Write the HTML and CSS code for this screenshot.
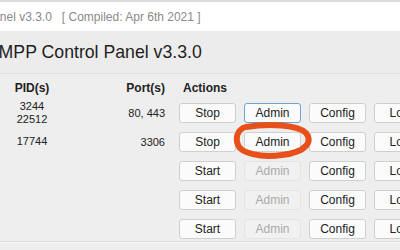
FILE: index.html
```html
<html>
    <head>
        <link rel="stylesheet" href="styles.css">
    </head>
    <body>
    <div class="titlebar"><span class="titletext">XAMPP Control Panel v3.3.0&nbsp;&nbsp;&nbsp;[ Compiled: Apr 6th 2021 ]</span></div>

    <div class="banner"><h1 class="header">XAMPP Control Panel v3.3.0</h1></div>

    <div class="modules">
        <div class="tbl">
            <div class="th pid">PID(s)</div>
            <div class="th port">Port(s)</div>
            <div class="th actions">Actions</div>

            <div class="pid">3244<br>22512</div>
            <div class="port">80, 443</div>
            <div class="actions">
                <button>Stop</button><button class="focus">Admin</button><button>Config</button><button>Logs</button>
            </div>

            <div class="pid">17744</div>
            <div class="port">3306</div>
            <div class="actions">
                <button>Stop</button><button>Admin</button><button>Config</button><button>Logs</button>
            </div>

            <div class="pid"></div>
            <div class="port"></div>
            <div class="actions">
                <button>Start</button><button disabled>Admin</button><button>Config</button><button>Logs</button>
            </div>

            <div class="pid"></div>
            <div class="port"></div>
            <div class="actions">
                <button>Start</button><button disabled>Admin</button><button>Config</button><button>Logs</button>
            </div>

            <div class="pid"></div>
            <div class="port"></div>
            <div class="actions">
                <button>Start</button><button disabled>Admin</button><button>Config</button><button>Logs</button>
            </div>
        </div>
    </div>

    <!-- hand drawn circle round the second Admin button -->
    <svg class="mark" width="400" height="250" viewBox="0 0 400 250">
        <path d="M246 127 C270 123 298 125 306 133 C313 141 307 152 282 155 C260 158 241 153 238 145 C235 137 238 131 243 128"
              fill="none" stroke="#e8501a" stroke-width="6" stroke-linecap="round"/>
    </svg>
    </body>
</html>
```

FILE: styles.css
```css
body {
    margin: 0;
    width: 400px;
    height: 250px;
    overflow: hidden;
    position: relative;
    background-color: #eeeeee;
    font-family: "Liberation Sans", Arial, sans-serif;
    color: #222;
}
.titlebar {
    height: 29px;
    border-top: 2px solid #dcdcdc;
    background-color: white;
    display: flex;
    align-items: center;
    white-space: nowrap;
}
.titletext {
    margin-left: -102px;
    font-size: 12px;
    color: #8a8a8a;
}
.banner {
    height: 42px;
    background-color: #ececec;
    border-bottom: 1px solid #dedede;
    display: flex;
    align-items: center;
    white-space: nowrap;
}
.header {
    margin: 0 0 0 -25px;
    font-size: 17.7px;
    font-weight: normal;
    color: #1e1e1e;
}
.modules {
    padding-top: 7px;
    height: 160px;
    border-bottom: 1px solid #dcdcdc;
    box-shadow: 0 1px 0 #f8f8f8;
}
.tbl {
    display: grid;
    grid-template-columns: 64px 87px 1fr;
    grid-template-rows: 15px repeat(5, 29px);
    column-gap: 14px;
    row-gap: 0;
    font-size: 11px;
    width: 620px;
}
.th {
    font-weight: bold;
    font-size: 12px;
    line-height: 15px;
}
.pid {
    text-align: center;
    line-height: 13px;
    align-self: center;
}
.port {
    text-align: right;
    align-self: center;
}
.th.actions {
    padding-left: 4px;
}
.tbl > div:nth-child(n+4) {
    position: relative;
    top: 2px;
}
.actions {
    display: flex;
    gap: 8px;
    align-items: center;
}
button {
    width: 57px;
    height: 20px;
    padding: 0;
    font-family: "Liberation Sans", Arial, sans-serif;
    font-size: 12px;
    color: #222;
    background-color: #fbfbfb;
    border: 1px solid #cfcfcf;
    border-radius: 3px;
}
button.focus {
    border-color: #6ea4d6;
}
button:disabled {
    background-color: #f1f1f1;
    border-color: #e4e4e4;
    color: #aaaaaa;
}
.mark {
    position: absolute;
    left: 0;
    top: 0;
    pointer-events: none;
}
```
